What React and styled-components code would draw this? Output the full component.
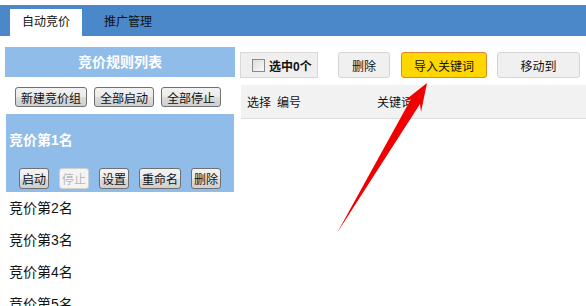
import styled, { createGlobalStyle } from "styled-components";

const GlobalStyle = createGlobalStyle`
  body {
    margin: 0;
    background: #fff;
    font-family: "Liberation Sans", "Noto Sans CJK SC", sans-serif;
    color: #111;
    overflow: hidden;
  }
`;

const Page = styled.div`
  position: relative;
  width: 586px;
  height: 306px;
  overflow: hidden;
`;

const TabBar = styled.div`
  margin-top: 5px;
  height: 31px;
  background: #4a88c9;
  display: flex;
  align-items: flex-end;
  gap: 10px;
  padding-left: 10px;
`;

const Tab = styled.div`
  height: 27px;
  line-height: 27px;
  padding: 0 12px;
  font-size: 12px;
  background: ${(p) => (p.$active ? "#fff" : "transparent")};
  color: #111;
`;

const Main = styled.div`
  display: flex;
  margin-top: 11px;
  gap: 5px;
  padding-left: 5px;
`;

const Side = styled.div`
  width: 230px;
  flex-shrink: 0;
`;

const SideTitle = styled.div`
  height: 30px;
  line-height: 30px;
  background: #8fbce8;
  color: #fff;
  font-weight: bold;
  font-size: 14px;
  text-align: center;
`;

const SideTools = styled.div`
  display: flex;
  gap: 7px;
  padding: 10px 0 7px 10px;
`;

const OldButton = styled.button`
  height: ${(p) => (p.$small ? "21px" : "20px")};
  padding: 0 ${(p) => (p.$small ? "2px" : "5px")};
  font-family: inherit;
  font-size: 12px;
  color: ${(p) => (p.disabled ? "#b8b8b8" : "#111")};
  border: 1px solid ${(p) => (p.disabled ? "#d0d0d0" : "#707070")};
  border-radius: 3px;
  background: ${(p) =>
    p.disabled
      ? "#f4f4f4"
      : "linear-gradient(#f2f2f2 0%, #ebebeb 50%, #dddddd 51%, #cfcfcf 100%)"};
  cursor: default;
`;

const Group = styled.div`
  background: ${(p) => (p.$selected ? "#8fbce8" : "transparent")};
  margin-left: ${(p) => (p.$selected ? "1px" : "0")};
  width: ${(p) => (p.$selected ? "228px" : "auto")};
`;

const GroupName = styled.div`
  padding-left: ${(p) => (p.$selected ? "3px" : "4px")};
  height: ${(p) => (p.$selected ? "52px" : "32px")};
  line-height: ${(p) => (p.$selected ? "52px" : "32px")};
  font-size: 14px;
  font-weight: ${(p) => (p.$selected ? "bold" : "normal")};
  color: ${(p) => (p.$selected ? "#fff" : "#111")};
`;

const GroupTools = styled.div`
  display: flex;
  gap: 10px;
  padding: 2px 0 3px 13px;
`;

const Content = styled.div`
  flex: 1;
`;

const TopRow = styled.div`
  display: flex;
  align-items: center;
  margin-top: 5px;
  height: 26px;
`;

const SelectBox = styled.label`
  width: 78px;
  height: 26px;
  box-sizing: border-box;
  display: flex;
  align-items: center;
  gap: 4px;
  padding-left: 11px;
  background: #efefef;
  border: 1px solid #d8d8d8;
  font-size: 12px;
  font-weight: bold;
`;

const Check = styled.span`
  width: 11px;
  height: 11px;
  border: 1px solid #8a8a8a;
  background: linear-gradient(135deg, #dcdcdc, #fafafa);
`;

const FlatButton = styled.div`
  margin-left: ${(p) => p.$gap}px;
  width: ${(p) => p.$w}px;
  height: 26px;
  box-sizing: border-box;
  display: flex;
  align-items: center;
  justify-content: center;
  font-size: 12px;
  border-radius: 3px;
  background: ${(p) => (p.$primary ? "#ffd700" : "#f0f0f0")};
  border: 1px solid ${(p) => (p.$primary ? "#e2862a" : "#d4d4d4")};
`;

const TableHead = styled.div`
  margin-top: 7px;
  margin-left: 1px;
  height: 34px;
  box-sizing: border-box;
  background: #f2f2f2;
  border-bottom: 1px solid #dcdcdc;
  display: flex;
  align-items: center;
  padding-left: 6px;
  font-size: 12px;
`;

const HeadCell = styled.span`
  width: ${(p) => p.$w}px;
`;

const Arrow = styled.svg`
  position: absolute;
  left: 0;
  top: 0;
  pointer-events: none;
`;

const groups = ["竞价第2名", "竞价第3名", "竞价第4名", "竞价第5名"];

export default function App() {
  return (
    <Page>
      <GlobalStyle />
      <TabBar>
        <Tab $active>自动竞价</Tab>
        <Tab>推广管理</Tab>
      </TabBar>
      <Main>
        <Side>
          <SideTitle>竞价规则列表</SideTitle>
          <SideTools>
            <OldButton>新建竞价组</OldButton>
            <OldButton>全部启动</OldButton>
            <OldButton>全部停止</OldButton>
          </SideTools>
          <Group $selected>
            <GroupName $selected>竞价第1名</GroupName>
            <GroupTools>
              <OldButton $small>启动</OldButton>
              <OldButton $small disabled>停止</OldButton>
              <OldButton $small>设置</OldButton>
              <OldButton $small>重命名</OldButton>
              <OldButton $small>删除</OldButton>
            </GroupTools>
          </Group>
          {groups.map((g) => (
            <Group key={g}>
              <GroupName>{g}</GroupName>
            </Group>
          ))}
        </Side>
        <Content>
          <TopRow>
            <SelectBox>
              <Check />
              选中0个
            </SelectBox>
            <FlatButton $gap={20} $w={52}>删除</FlatButton>
            <FlatButton $gap={11} $w={86} $primary>导入关键词</FlatButton>
            <FlatButton $gap={10} $w={83}>移动到</FlatButton>
          </TopRow>
          <TableHead>
            <HeadCell $w={30}>选择</HeadCell>
            <HeadCell $w={100}>编号</HeadCell>
            <HeadCell>关键词</HeadCell>
          </TableHead>
        </Content>
      </Main>
      <Arrow width="586" height="306" viewBox="0 0 586 306">
        <polygon
          points="337,233 411,99 403,102 427,83 421,112 420,104"
          fill="#f00000"
        />
      </Arrow>
    </Page>
  );
}
